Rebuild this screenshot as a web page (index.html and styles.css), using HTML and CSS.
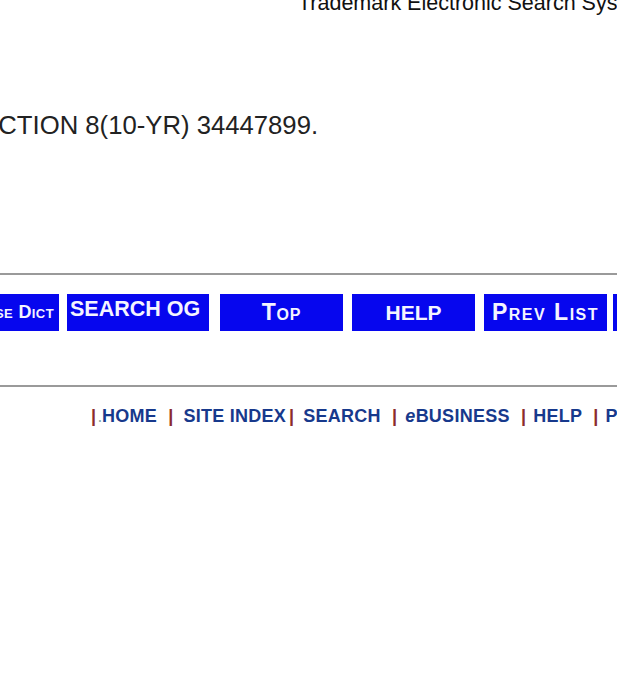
FILE: index.html
```html
<!DOCTYPE html>
<html>
<head>
<meta charset="utf-8">
<title>TESS</title>
<link rel="stylesheet" href="styles.css">
</head>
<body>
<div class="page">
  <div class="title">Trademark Electronic Search System (TESS)</div>
  <div class="record">SECTION 8(10-YR) 34447899.</div>
  <div class="rule"></div>
  <div class="buttons">
    <a class="btn btn-sc btn-dict">Browse Dict</a>
    <a class="btn btn-og">SEARCH OG</a>
    <a class="btn btn-sc">Top</a>
    <a class="btn btn-help">HELP</a>
    <a class="btn btn-sc btn-prev">Prev List</a>
    <a class="btn btn-sc">Curr List</a>
  </div>
  <div class="rule rule2"></div>
  <div class="footer">
    <span class="sep">|</span><span class="dot">.</span><a class="lnk">HOME</a>
    <span class="sep sp sp-a">|</span><a class="lnk">SITE INDEX</a><span class="sep sp2">|</span><a class="lnk">SEARCH</a>
    <span class="sep sp sp-b">|</span><a class="lnk"><i>e</i>BUSINESS</a>
    <span class="sep sp">|</span><a class="lnk">HELP</a>
    <span class="sep sp">|</span><a class="lnk">PRIVACY POLICY</a>
  </div>
</div>
</body>
</html>
```

FILE: styles.css
```css
html, body {
  margin: 0;
  padding: 0;
  background: #ffffff;
  overflow: hidden;
}
.page {
  width: 1000px;
  font-family: "Liberation Sans", Arial, sans-serif;
}
.title {
  font-size: 21.5px;
  line-height: 24px;
  color: #111;
  padding-left: 298px;
  margin-top: -9px;
  white-space: nowrap;
}
.record {
  font-size: 25.7px;
  line-height: 30px;
  color: #222;
  margin-left: -36px;
  margin-top: 95px;
  white-space: nowrap;
}
.rule {
  height: 2px;
  background: #9a9a9a;
  margin-top: 133px;
  width: 617px;
}
.buttons {
  display: flex;
  margin-top: 19px;
  margin-left: -64px;
  height: 37px;
}
.btn {
  display: flex;
  align-items: center;
  justify-content: center;
  height: 37px;
  width: 123px;
  background: #0606ee;
  color: #f4f4ff;
  font-weight: bold;
  white-space: nowrap;
  flex: none;
  box-sizing: border-box;
}
.btn-sc {
  font-variant: small-caps;
  font-size: 23px;
  letter-spacing: 0.8px;
}
.btn-dict {
  font-size: 18px;
  letter-spacing: 0.4px;
  justify-content: flex-end;
  padding-right: 5px;
}
.btn-prev {
  letter-spacing: 1.5px;
}
.btn-og {
  width: 142px;
  margin-left: 8px;
  margin-right: 11px;
  justify-content: flex-start;
  align-items: flex-start;
  padding-left: 3px;
  font-size: 21.5px;
  line-height: 30px;
}
.btn-help {
  font-size: 21px;
  margin-left: 9px;
  margin-right: 9px;
}
.btn-sc + .btn-sc {
  margin-left: 6px;
}
.rule2 {
  margin-top: 54px;
}
.footer {
  margin-top: 18px;
  padding-left: 91px;
  font-size: 18px;
  line-height: 22px;
  font-weight: bold;
  white-space: nowrap;
  letter-spacing: 0.25px;
}
.lnk {
  color: #17398c;
}
.dot {
  color: #8aa;
  font-size: 12px;
  margin-left: 2px;
}
.sep {
  color: #8b2c2c;
}
.sp {
  margin-left: 6px;
  margin-right: 7px;
}
.sp-a {
  margin-right: 10px;
}
.sp-b {
  margin-right: 8px;
}
.sp2 {
  margin-left: 3px;
  margin-right: 9px;
}
```
